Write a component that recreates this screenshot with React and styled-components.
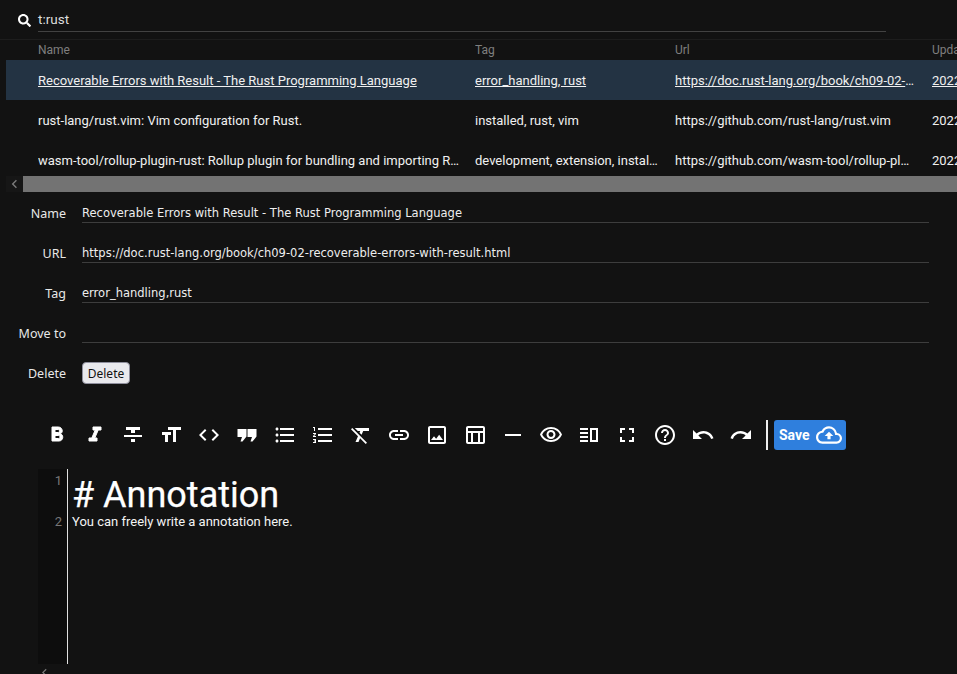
import styled, {createGlobalStyle} from "styled-components"
import {FaSearch} from "react-icons/fa"
import {
  MdChevronLeft,
  MdFormatBold,
  MdFormatItalic,
  MdFormatStrikethrough,
  MdFormatSize,
  MdCode,
  MdFormatListBulleted,
  MdFormatListNumbered,
  MdFormatClear,
  MdLink,
  MdOutlineImage,
  MdOutlineTableChart,
  MdHorizontalRule,
  MdOutlineVisibility,
  MdOutlineVerticalSplit,
  MdFullscreen,
  MdHelpOutline,
  MdUndo,
  MdRedo,
  MdOutlineCloudUpload,
} from "react-icons/md"

const GlobalStyle = createGlobalStyle`
  html, body {
    margin: 0;
    padding: 0;
    height: 674px;
    overflow: hidden;
    background-color: #121212;
  }
`

const Page = styled.div`
  width: 957px;
  height: 674px;
  overflow: hidden;
  background-color: #121212;
  color: #fff;
  font-family: Roboto, sans-serif;
  font-size: 13px;
`

const SearchBar = styled.div`
  height: 39px;
  display: flex;
  align-items: flex-start;
  padding-left: 18px;
  border-bottom: 1px solid #1d1d1d;
`

const SearchIcon = styled(FaSearch)`
  font-size: 13px;
  margin-top: 14px;
  margin-right: 7px;
  color: #fff;
`

const SearchField = styled.div`
  width: 848px;
  height: 31px;
  line-height: 38px;
  font-size: 13.5px;
  color: #ddd;
  border-bottom: 1px solid #424242;
`

const Table = styled.div`
  height: 136px;
  padding-left: 6px;
  overflow: hidden;
`

const Row = styled.div`
  display: grid;
  grid-template-columns: 437px 200px 257px 100px;
  width: 994px;
  height: ${(props) => (props.$head ? "20px" : "40px")};
  align-items: center;
  padding-left: 32px;
  box-sizing: border-box;
  font-size: ${(props) => (props.$head ? "12px" : "13px")};
  color: ${(props) => (props.$head ? "#7f7f7f" : "#f0f0f0")};
  background-color: ${(props) => (props.$selected ? "#233343" : "transparent")};
  text-decoration: ${(props) => (props.$selected ? "underline" : "none")};
`

const Cell = styled.div`
  padding-right: 16px;
  white-space: nowrap;
  overflow: hidden;
  text-overflow: ellipsis;
`

const ScrollBar = styled.div`
  height: 16px;
  margin-left: 6px;
  display: flex;
  background-color: #161616;
`

const ScrollArrow = styled.div`
  width: 17px;
  display: flex;
  align-items: center;
  justify-content: center;
  color: #7a7a7a;
  font-size: 18px;
`

const ScrollThumb = styled.div`
  flex: 1;
  background-color: #737373;
`

const Form = styled.div`
  padding: 1px 28px 0 0;
  display: flex;
  flex-direction: column;
`

const FormRow = styled.div`
  height: 40px;
  display: grid;
  grid-template-columns: 66px 1fr;
  column-gap: 16px;
  align-items: start;
`

const FormLabel = styled.div`
  font-family: "Noto Sans", sans-serif;
  font-size: 12.5px;
  line-height: 41px;
  text-align: right;
  color: #e8e8e8;
`

const FormValue = styled.div`
  height: 24px;
  padding-top: 5px;
  line-height: 31px;
  font-family: "DejaVu Sans", sans-serif;
  font-size: 11.5px;
  letter-spacing: 0.01px;
  color: #eee;
  white-space: nowrap;
  border-bottom: 1px solid #3d3d3d;
`

const DeleteButton = styled.button`
  margin-top: 9px;
  width: 48px;
  height: 22px;
  padding: 0;
  font-family: "Noto Sans", sans-serif;
  font-size: 12px;
  color: #111;
  background-color: #e9e9ed;
  border: 1px solid #8f8f9d;
  border-radius: 4px;
`

const Toolbar = styled.div`
  margin-top: 27px;
  height: 30px;
  padding-left: 38px;
  display: flex;
  align-items: center;
`

const ToolButton = styled.div`
  width: 38px;
  height: 30px;
  display: flex;
  align-items: center;
  justify-content: center;
  font-size: 24px;
  color: #fff;

  path:not([fill="none"]) {
    stroke: currentColor;
    stroke-width: ${(props) => (props.$heavy ? "1px" : "0")};
  }
`

const Divider = styled.div`
  width: 2px;
  height: 30px;
  margin: 0 6px 0 6px;
  background-color: #eee;
`

const SaveButton = styled.button`
  width: 72px;
  height: 30px;
  padding: 0 0 0 5px;
  display: flex;
  align-items: center;
  gap: 6px;
  font-family: Roboto, sans-serif;
  font-size: 14px;
  font-weight: 700;
  color: #fff;
  background-color: #2f7fdd;
  border: none;
  border-radius: 3px;
`

const Editor = styled.div`
  margin: 19px 0 0 38px;
  height: 195px;
  display: flex;
`

const Gutter = styled.div`
  width: 29px;
  background-color: #0d0d0d;
  border-right: 1px solid #e0e0e0;
  font-size: 13px;
  color: #777;
  text-align: right;
`

const LineNumber = styled.div`
  height: ${(props) => props.$height}px;
  padding-right: 5px;
  line-height: 24px;
`

const Content = styled.div`
  padding-left: 3px;
`

const Heading = styled.div`
  height: 39px;
  padding-left: 1px;
  font-size: 36px;
  line-height: 52px;
  color: #fff;
  -webkit-text-stroke: 0.25px #fff;
`

const Line = styled.div`
  margin-top: 5px;
  padding-left: 1px;
  font-size: 13px;
  line-height: 18px;
  color: #f4f4f4;
`

const BottomArrow = styled.div`
  margin: 1px 0 0 37px;
  height: 10px;
  color: #777;
  font-size: 15px;
`

// squared double quote, the package's format_quote is rounder and smaller
function QuoteIcon() {
  return (
    <svg width="24" height="24" viewBox="0 0 24 24" fill="currentColor">
      <path d="M2.500 6h9v7.500l-4 5h-2L7 14H2.500z" />
      <path d="M12.500 6h9v7.500l-4 5h-2L17 14h-4.500z" />
    </svg>
  )
}

const rows = [
  {
    name: "Recoverable Errors with Result - The Rust Programming Language",
    tag: "error_handling, rust",
    url: "https://doc.rust-lang.org/book/ch09-02-recoverable-errors-with-result.html",
    updated: "2022-01-01",
    selected: true,
  },
  {
    name: "rust-lang/rust.vim: Vim configuration for Rust.",
    tag: "installed, rust, vim",
    url: "https://github.com/rust-lang/rust.vim",
    updated: "2022-01-01",
  },
  {
    name: "wasm-tool/rollup-plugin-rust: Rollup plugin for bundling and importing Rust crates.",
    tag: "development, extension, installed, rust",
    url: "https://github.com/wasm-tool/rollup-plugin-rust",
    updated: "2022-01-01",
  },
]

const fields = [
  {label: "Name", value: "Recoverable Errors with Result - The Rust Programming Language"},
  {label: "URL", value: "https://doc.rust-lang.org/book/ch09-02-recoverable-errors-with-result.html"},
  {label: "Tag", value: "error_handling,rust"},
  {label: "Move to", value: ""},
]

const tools = [
  {icon: MdFormatBold, heavy: true},
  {icon: MdFormatItalic, heavy: true},
  {icon: MdFormatStrikethrough},
  {icon: MdFormatSize},
  {icon: MdCode},
  {icon: QuoteIcon},
  {icon: MdFormatListBulleted},
  {icon: MdFormatListNumbered},
  {icon: MdFormatClear},
  {icon: MdLink},
  {icon: MdOutlineImage},
  {icon: MdOutlineTableChart},
  {icon: MdHorizontalRule},
  {icon: MdOutlineVisibility},
  {icon: MdOutlineVerticalSplit},
  {icon: MdFullscreen},
  {icon: MdHelpOutline},
  {icon: MdUndo},
  {icon: MdRedo},
]

export default function App() {
  return (
    <Page>
      <GlobalStyle />
      <SearchBar>
        <SearchIcon />
        <SearchField>t:rust</SearchField>
      </SearchBar>
      <Table>
        <Row $head>
          <Cell>Name</Cell>
          <Cell>Tag</Cell>
          <Cell>Url</Cell>
          <Cell>Updated</Cell>
        </Row>
        {rows.map((row) => (
          <Row key={row.url} $selected={row.selected}>
            <Cell>{row.name}</Cell>
            <Cell>{row.tag}</Cell>
            <Cell>{row.url}</Cell>
            <Cell>{row.updated}</Cell>
          </Row>
        ))}
      </Table>
      <ScrollBar>
        <ScrollArrow>
          <MdChevronLeft />
        </ScrollArrow>
        <ScrollThumb />
      </ScrollBar>
      <Form>
        {fields.map((field) => (
          <FormRow key={field.label}>
            <FormLabel>{field.label}</FormLabel>
            <FormValue>{field.value}</FormValue>
          </FormRow>
        ))}
        <FormRow>
          <FormLabel>Delete</FormLabel>
          <div>
            <DeleteButton>Delete</DeleteButton>
          </div>
        </FormRow>
      </Form>
      <Toolbar>
        {tools.map(({icon: Icon, heavy}, i) => (
          <ToolButton key={i} $heavy={heavy}>
            <Icon />
          </ToolButton>
        ))}
        <Divider />
        <SaveButton>
          Save
          <MdOutlineCloudUpload size={26} />
        </SaveButton>
      </Toolbar>
      <Editor>
        <Gutter>
          <LineNumber $height={41}>1</LineNumber>
          <LineNumber $height={24}>2</LineNumber>
        </Gutter>
        <Content>
          <Heading># Annotation</Heading>
          <Line>You can freely write a annotation here.</Line>
        </Content>
      </Editor>
      <BottomArrow>
        <MdChevronLeft />
      </BottomArrow>
    </Page>
  )
}
